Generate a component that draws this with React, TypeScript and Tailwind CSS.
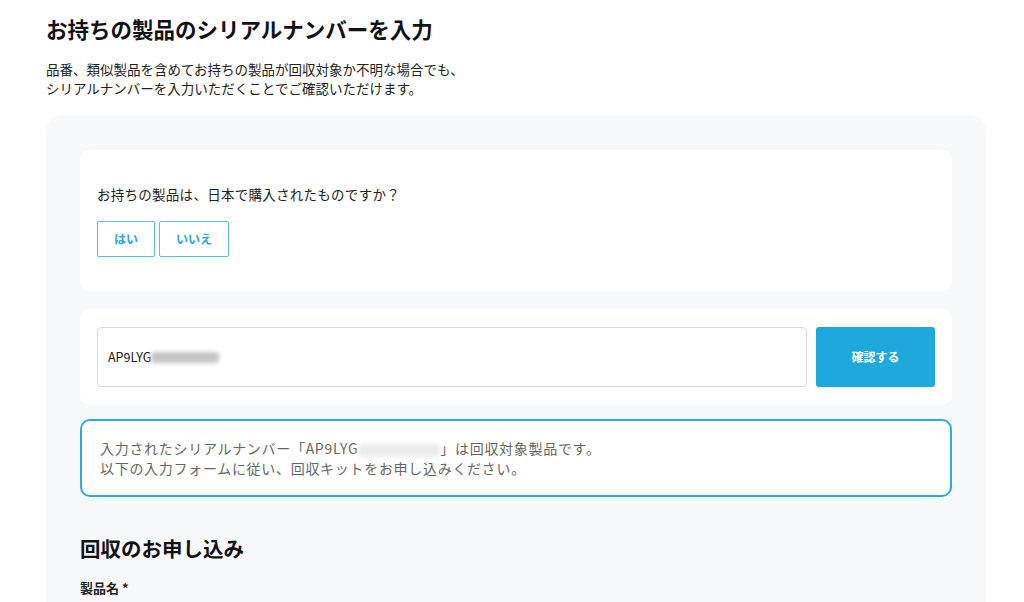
import React from 'react';

const font = { fontFamily: '"Noto Sans CJK JP", "Noto Sans", sans-serif' };

function Blur({ className }: { className: string }) {
  return <span className={`inline-block align-middle rounded-sm blur-[2px] ${className}`} />;
}

export default function App() {
  return (
    <div className="min-h-[602px] bg-white text-[#222]" style={font}>
      <div className="pl-[46px] pr-[38px] pt-[13px]">
        <h1 className="text-[21.5px] font-bold leading-[32px] text-[#111]">
          お持ちの製品のシリアルナンバーを入力
        </h1>
        <p className="mt-[15px] text-[13.5px] leading-[19px] text-[#222]">
          品番、類似製品を含めてお持ちの製品が回収対象か不明な場合でも、
          <br />
          シリアルナンバーを入力いただくことでご確認いただけます。
        </p>

        <div className="mt-[17px] rounded-[16px] bg-[#f7f8fa] px-[34px] pt-[35px] pb-[20px]">
          {/* Question */}
          <div className="rounded-[10px] bg-white px-[17px] pt-[34px] pb-[34px]">
            <p className="text-[13.5px] leading-[20px] tracking-[0.02em] text-[#222]">
              お持ちの製品は、日本で購入されたものですか？
            </p>
            <div className="mt-[17px] flex gap-[4px]">
              <button className="h-[36px] w-[58px] rounded-[2px] border border-[#5bbce6] bg-white text-[12px] font-bold text-[#2aa6dc]">
                はい
              </button>
              <button className="h-[36px] w-[70px] rounded-[2px] border border-[#5bbce6] bg-white text-[12px] font-bold text-[#2aa6dc]">
                いいえ
              </button>
            </div>
          </div>

          {/* Serial input */}
          <div className="mt-[18px] flex gap-[9px] rounded-[10px] bg-white px-[17px] py-[18px]">
            <div className="flex h-[60px] flex-1 items-center rounded-[4px] border border-[#dcdcdc] px-[10px] text-[12.5px] text-[#222]">
              <span>AP9LYG</span>
              <Blur className="h-[11px] w-[68px] bg-[#c4c4c4]" />
            </div>
            <button className="h-[60px] w-[119px] rounded-[3px] bg-[#1fa8dc] text-[12px] font-bold text-white">
              確認する
            </button>
          </div>

          {/* Result */}
          <div className="mt-[14px] rounded-[10px] border-2 border-[#2aabe1] bg-white px-[18px] py-[17px] text-[14px] leading-[20px] tracking-[0.05em] text-[#666]">
            <p>
              入力されたシリアルナンバー「AP9LYG
              <Blur className="h-[13px] w-[82px] bg-[#ececec]" />
              」は回収対象製品です。
            </p>
            <p>以下の入力フォームに従い、回収キットをお申し込みください。</p>
          </div>

          <h2 className="mt-[36px] text-[20.5px] font-bold leading-[30px] text-[#111]">
            回収のお申し込み
          </h2>
          <p className="mt-[15px] text-[13px] font-bold leading-[20px] text-[#222]">製品名 *</p>
        </div>
      </div>
    </div>
  );
}
